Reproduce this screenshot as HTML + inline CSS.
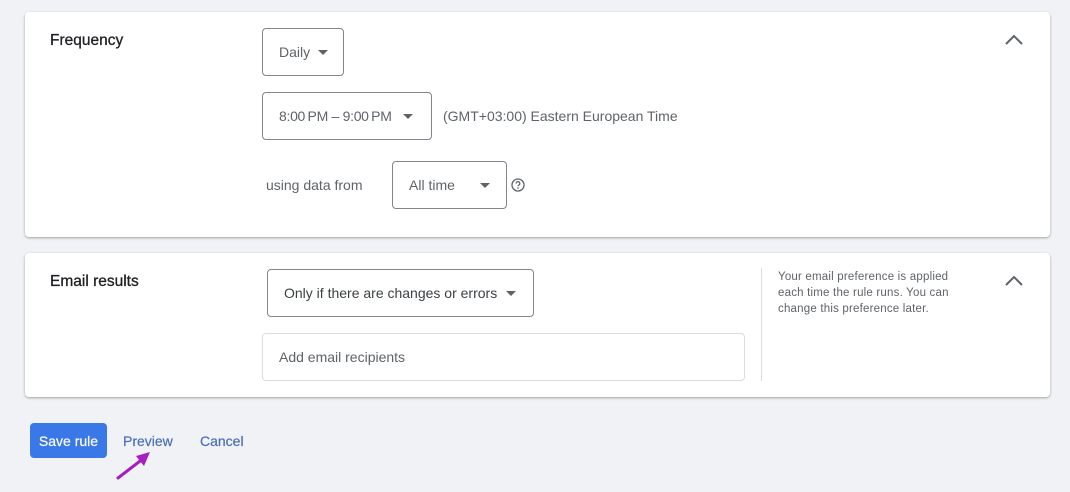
<!DOCTYPE html>
<html><head><meta charset="utf-8"><style>
*{box-sizing:border-box;margin:0;padding:0}
body{width:1070px;height:492px;background:#f1f2f5;font-family:"Liberation Sans",Arial,sans-serif;position:relative;overflow:hidden;color:#3c4043}
.card{position:absolute;left:25px;width:1025px;background:#fff;border-radius:4px;box-shadow:0 1px 2px rgba(0,0,0,.25),0 1px 3px rgba(0,0,0,.1)}
.abs{position:absolute}
.title{font-size:15.5px;color:#202124;-webkit-text-stroke:0.3px #202124}
.box{position:absolute;border:1px solid #80868b;border-radius:4px;font-size:14px;color:#5f6368;display:flex;align-items:center;padding-left:16px}
.tri{display:inline-block;width:0;height:0;border-left:5px solid transparent;border-right:5px solid transparent;border-top:5px solid #5f6368;margin-left:8px}
.txt{position:absolute;font-size:14px;color:#5f6368}
.chev{position:absolute;width:20px;height:12px}
.btn{-webkit-text-stroke:0.2px currentColor}
</style></head><body>
<div class="card" style="top:12px;height:225px">
  <div class="abs title" style="left:25px;top:20px">Frequency</div>
  <div class="box" style="left:237px;top:16px;width:82px;height:48px">Daily<span class="tri"></span></div>
  <div class="box" style="left:237px;top:80px;width:170px;height:48px"><span style="letter-spacing:-0.3px">8:00&#8201;PM – 9:00&#8201;PM</span><span class="tri" style="margin-left:11px"></span></div>
  <div class="txt" style="left:418px;top:96px">(GMT+03:00) Eastern European Time</div>
  <div class="txt" style="left:241px;top:165px">using data from</div>
  <div class="box" style="left:367px;top:149px;width:115px;height:48px">All time<span class="tri" style="margin-left:25px"></span></div>
  <svg class="abs" style="left:485px;top:165px" width="16" height="16" viewBox="0 0 16 16"><circle cx="8" cy="8" r="6" fill="none" stroke="#5f6368" stroke-width="1.3"/><path d="M6.2 6.5a1.8 1.8 0 1 1 2.5 1.6c-.5.3-.7.6-.7 1.2" fill="none" stroke="#5f6368" stroke-width="1.2"/><circle cx="8" cy="11" r=".8" fill="#5f6368"/></svg>
  <svg class="chev" style="left:979px;top:22px" viewBox="0 0 20 12"><path d="M2 10L10 2l8 8" fill="none" stroke="#5f6368" stroke-width="2"/></svg>
</div>
<div class="card" style="top:253px;height:144px">
  <div class="abs title" style="left:25px;top:20px">Email results</div>
  <div class="box" style="left:242px;top:16px;width:267px;height:48px;color:#3c4043">Only if there are changes or errors<span class="tri" style="margin-left:9px"></span></div>
  <div class="box" style="left:237px;top:80px;width:483px;height:48px;border-color:#dadce0">Add email recipients</div>
  <div class="abs" style="left:736px;top:15px;width:1px;height:113px;background:#dadce0"></div>
  <div class="abs" style="left:753px;top:16px;font-size:11.5px;line-height:16px;color:#5f6368;width:185px;letter-spacing:0.2px">Your email preference is applied each time the rule runs. You can change this preference later.</div>
  <svg class="chev" style="left:979px;top:22px" viewBox="0 0 20 12"><path d="M2 10L10 2l8 8" fill="none" stroke="#5f6368" stroke-width="2"/></svg>
</div>
<div class="abs btn" style="left:30px;top:423px;width:77px;height:35px;background:#3b78e7;border-radius:4px;color:#fff;font-size:14px;display:flex;align-items:center;justify-content:center">Save rule</div>
<div class="abs btn" style="left:123px;top:433px;font-size:14px;color:#4a6fb5">Preview</div>
<div class="abs btn" style="left:200px;top:433px;font-size:14px;color:#4a6fb5">Cancel</div>
<svg class="abs" style="left:112px;top:448px" width="44" height="34" viewBox="0 0 44 34"><path d="M6 30L32 10" stroke="#a51fc0" stroke-width="3" stroke-linecap="round"/><path d="M38 4L24 8l8 10z" fill="#a51fc0"/></svg>
</body></html>
